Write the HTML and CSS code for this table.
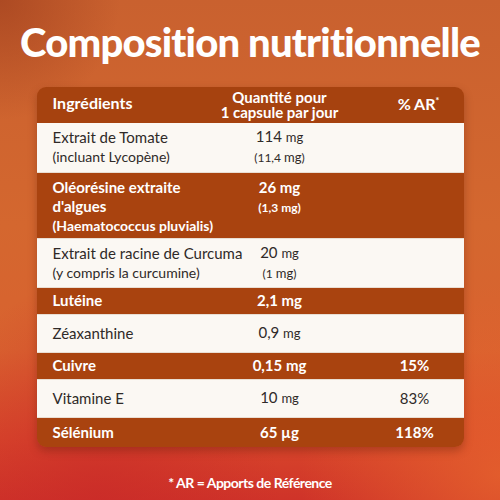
FILE: index.html
```html
<!DOCTYPE html>
<html lang="fr">
<head>
  <meta charset="UTF-8" />
  <meta name="viewport" content="width=device-width, initial-scale=1.0"/>
  <title>Composition nutritionnelle</title>
  <link rel="stylesheet" href="styles.css">
</head>
<body>
  <div class="page">
    <h1 class="title">Composition nutritionnelle</h1>

    <table class="compo">
      <colgroup>
        <col class="col-name">
        <col class="col-qty">
        <col class="col-ar">
      </colgroup>
      <thead>
        <tr>
          <th class="name">Ingrédients</th>
          <th class="qty">Quantité pour<br>1 capsule par jour</th>
          <th class="ar">% AR<sup>*</sup></th>
        </tr>
      </thead>
      <tbody>
        <tr class="light two">
          <td class="name">Extrait de Tomate<br><span class="sub">(incluant Lycopène)</span></td>
          <td class="qty">114 <small>mg</small><br><span class="sub-qty">(11,4 <small>mg</small>)</span></td>
          <td class="ar"></td>
        </tr>
        <tr class="dark three">
          <td class="name">Oléorésine extraite<br>d'algues<br><span class="sub">(Haematococcus pluvialis)</span></td>
          <td class="qty">26 mg<br><span class="sub-qty">(1,3 mg)</span><br>&nbsp;</td>
          <td class="ar"></td>
        </tr>
        <tr class="light two">
          <td class="name">Extrait de racine de Curcuma<br><span class="sub">(y compris la curcumine)</span></td>
          <td class="qty">20 <small>mg</small><br><span class="sub-qty">(1 <small>mg</small>)</span></td>
          <td class="ar"></td>
        </tr>
        <tr class="dark">
          <td class="name">Lutéine</td>
          <td class="qty">2,1 mg</td>
          <td class="ar"></td>
        </tr>
        <tr class="light">
          <td class="name">Zéaxanthine</td>
          <td class="qty">0,9 <small>mg</small></td>
          <td class="ar"></td>
        </tr>
        <tr class="dark">
          <td class="name">Cuivre</td>
          <td class="qty">0,15 mg</td>
          <td class="ar">15%</td>
        </tr>
        <tr class="light">
          <td class="name">Vitamine E</td>
          <td class="qty">10 <small>mg</small></td>
          <td class="ar">83%</td>
        </tr>
        <tr class="dark last">
          <td class="name">Sélénium</td>
          <td class="qty">65 µg</td>
          <td class="ar">118%</td>
        </tr>
      </tbody>
    </table>

    <p class="note">* AR = Apports de Référence</p>
  </div>
</body>
</html>
```

FILE: styles.css
```css
* {
  box-sizing: border-box;
}

body {
  margin: 0;
  width: 500px;
  height: 500px;
  overflow: hidden;
  font-family: Lato, "Open Sans", sans-serif;
}

.page {
  width: 500px;
  height: 500px;
  padding-top: 14px;
  display: flex;
  flex-direction: column;
  align-items: center;
  background:
    radial-gradient(circle at 0% 0%, rgba(150, 55, 25, 0.55) 0, rgba(150, 55, 25, 0) 120px),
    radial-gradient(ellipse at 100% 95%, rgba(230, 100, 45, 0.8) 0, rgba(230, 100, 45, 0) 200px),
    radial-gradient(ellipse at 20% 100%, rgba(200, 40, 40, 0.6) 0, rgba(200, 40, 40, 0) 180px),
    linear-gradient(180deg, #c9612f 0%, #d4672f 45%, #d9622f 70%, #d8462b 88%, #cf3329 100%);
}

.title {
  margin: 0;
  color: #fff;
  font-size: 40px;
  font-weight: 900;
  letter-spacing: -0.8px;
  line-height: 56px;
  white-space: nowrap;
}

.compo {
  margin-top: 17px;
  width: 427px;
  table-layout: fixed;
  border-collapse: collapse;
  border-radius: 9px;
  overflow: hidden;
  box-shadow: 0 4px 8px rgba(90, 30, 10, 0.35);
}

.col-name {
  width: 157px;
}

.col-qty {
  width: 172px;
}

.col-ar {
  width: 98px;
}

th, td {
  white-space: nowrap;
  vertical-align: middle;
}

th {
  background-color: #a6420f;
  color: #fff;
  font-size: 16px;
  font-weight: 700;
  line-height: 16px;
  height: 36px;
  padding: 2px 0 2px;
}

th.name {
  text-align: left;
  padding-left: 16px;
  padding-bottom: 6px;
}

th.qty {
  text-align: center;
  font-size: 15px;
  line-height: 15px;
}

th.ar {
  text-align: center;
  padding-bottom: 8px;
  padding-left: 8px;
}

th sup {
  font-size: 9px;
  vertical-align: 6px;
}

td {
  font-size: 15px;
  line-height: 19px;
  padding-top: 0;
  padding-bottom: 0;
}

td.name {
  text-align: left;
  padding-left: 16px;
  overflow: visible;
}

td.qty, td.ar {
  text-align: center;
}

td small {
  font-size: 13px;
}

.sub {
  font-size: 14px;
}

.sub-qty {
  font-size: 12px;
}

.light td {
  background-color: #fbf8f3;
  color: #2f2a28;
  font-weight: 400;
  height: 38px;
}

.dark td {
  background-color: #a9430f;
  color: #fff;
  font-weight: 700;
  height: 27px;
}

.light.two td {
  height: 49px;
}

.dark.three td {
  height: 66px;
  padding-top: 5px;
  vertical-align: top;
}

.light + .dark td,
.dark + .light td {
  border-top: 1px solid #e9ded3;
}

.dark.last td {
  height: 30px;
}

.note {
  margin: 27px 0 0;
  color: #fff;
  font-size: 14px;
  font-weight: 700;
  letter-spacing: -0.5px;
}
```
